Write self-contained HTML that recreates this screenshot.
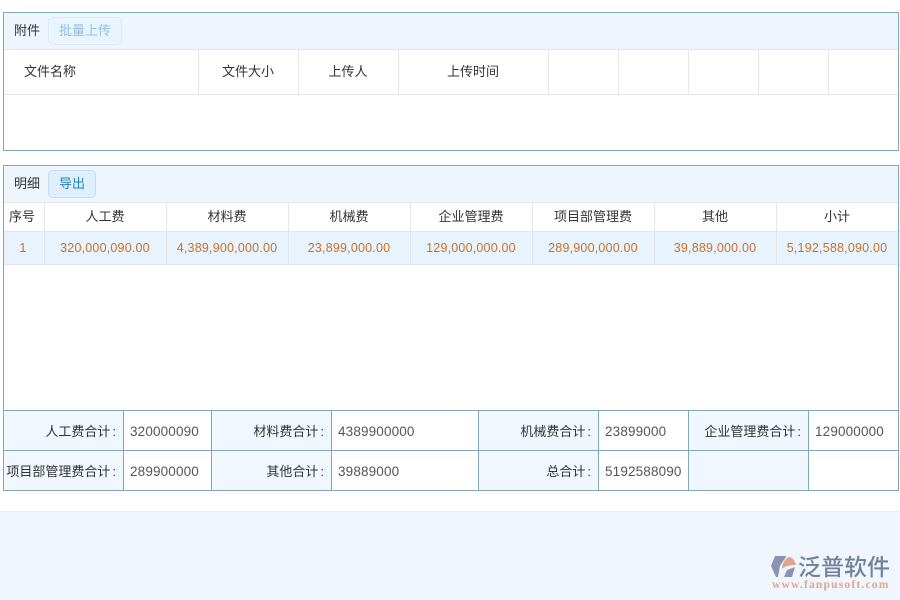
<!DOCTYPE html>
<html><head><meta charset="utf-8">
<style>
html,body{margin:0;padding:0;width:900px;height:600px;overflow:hidden;background:#fff}
body{position:relative;font-family:"Liberation Sans","Noto Sans CJK SC",sans-serif;font-size:13px;color:#333}
.a{position:absolute;box-sizing:border-box}
.t{position:absolute;white-space:nowrap;text-align:center;line-height:20px;height:20px;margin-top:1px}
.v{position:absolute;width:1px;background:#e3e6e8}
.h{position:absolute;height:1px;background:#e3e6e8}
.bv{position:absolute;width:1px;background:#7fa8ba}
.bh{position:absolute;height:1px;background:#7fa8ba}
.o{color:#c9702c;font-size:12.5px;letter-spacing:.2px}
.r{text-align:right}
.r b{font-weight:normal;padding-left:2px}
.n{color:#555;letter-spacing:.15px;text-align:left;font-size:13.5px}
.f{position:absolute;background:#f0f7fe}
</style></head><body>

<div class="a" style="left:3px;top:12px;width:896px;height:139px;border:1px solid #7fa8ba"></div>
<div class="a" style="left:4px;top:13px;width:894px;height:36px;background:#eef5fd"></div>
<div class="h" style="left:4px;top:49px;width:894px"></div>
<div class="h" style="left:4px;top:94px;width:894px"></div>
<div class="v" style="left:198px;top:50px;height:44px"></div>
<div class="v" style="left:298px;top:50px;height:44px"></div>
<div class="v" style="left:398px;top:50px;height:44px"></div>
<div class="v" style="left:548px;top:50px;height:44px"></div>
<div class="v" style="left:618px;top:50px;height:44px"></div>
<div class="v" style="left:688px;top:50px;height:44px"></div>
<div class="v" style="left:758px;top:50px;height:44px"></div>
<div class="v" style="left:828px;top:50px;height:44px"></div>
<div class="t" style="left:14px;top:20px">附件</div>
<div class="a" style="left:48px;top:17px;width:74px;height:28px;background:#e9f4fd;border:1px solid #d9e9f5;border-radius:5px"></div>
<div class="t" style="left:48px;top:20px;width:74px;color:#8fc0e4">批量上传</div>
<div class="t" style="left:24px;top:61px">文件名称</div>
<div class="t" style="left:198px;top:61px;width:100px">文件大小</div>
<div class="t" style="left:298px;top:61px;width:100px">上传人</div>
<div class="t" style="left:398px;top:61px;width:150px">上传时间</div>

<div class="a" style="left:3px;top:165px;width:896px;height:326px;border:1px solid #7fa8ba"></div>
<div class="a" style="left:4px;top:166px;width:894px;height:36px;background:#eef5fd"></div>
<div class="h" style="left:4px;top:202px;width:894px"></div>
<div class="a" style="left:4px;top:232px;width:894px;height:32px;background:#e8f4fd"></div>
<div class="h" style="left:4px;top:231px;width:894px"></div>
<div class="h" style="left:4px;top:264px;width:894px"></div>
<div class="v" style="left:44px;top:203px;height:61px"></div>
<div class="v" style="left:166px;top:203px;height:61px"></div>
<div class="v" style="left:288px;top:203px;height:61px"></div>
<div class="v" style="left:410px;top:203px;height:61px"></div>
<div class="v" style="left:532px;top:203px;height:61px"></div>
<div class="v" style="left:654px;top:203px;height:61px"></div>
<div class="v" style="left:776px;top:203px;height:61px"></div>
<div class="t" style="left:14px;top:173px">明细</div>
<div class="a" style="left:48px;top:170px;width:48px;height:28px;background:#dfeffb;border:1px solid #c4dcec;border-radius:5px"></div>
<div class="t" style="left:48px;top:173px;width:48px;color:#1f82c0">导出</div>

<div class="t" style="left:4px;top:206px;width:36px">序号</div>
<div class="t" style="left:44px;top:206px;width:122px">人工费</div>
<div class="t" style="left:166px;top:206px;width:122px">材料费</div>
<div class="t" style="left:288px;top:206px;width:122px">机械费</div>
<div class="t" style="left:410px;top:206px;width:122px">企业管理费</div>
<div class="t" style="left:532px;top:206px;width:122px">项目部管理费</div>
<div class="t" style="left:654px;top:206px;width:122px">其他</div>
<div class="t" style="left:776px;top:206px;width:122px">小计</div>

<div class="t o" style="left:4px;top:237px;width:38px">1</div>
<div class="t o" style="left:44px;top:237px;width:122px">320,000,090.00</div>
<div class="t o" style="left:166px;top:237px;width:122px">4,389,900,000.00</div>
<div class="t o" style="left:288px;top:237px;width:122px">23,899,000.00</div>
<div class="t o" style="left:410px;top:237px;width:122px">129,000,000.00</div>
<div class="t o" style="left:532px;top:237px;width:122px">289,900,000.00</div>
<div class="t o" style="left:654px;top:237px;width:122px">39,889,000.00</div>
<div class="t o" style="left:776px;top:237px;width:122px">5,192,588,090.00</div>

<div class="f" style="left:4px;top:411px;width:119px;height:79px"></div>
<div class="f" style="left:212px;top:411px;width:119px;height:79px"></div>
<div class="f" style="left:479px;top:411px;width:119px;height:79px"></div>
<div class="f" style="left:689px;top:411px;width:119px;height:79px"></div>
<div class="bh" style="left:4px;top:410px;width:894px"></div>
<div class="bh" style="left:4px;top:450px;width:894px"></div>
<div class="bv" style="left:123px;top:410px;height:80px"></div>
<div class="bv" style="left:211px;top:410px;height:80px"></div>
<div class="bv" style="left:331px;top:410px;height:80px"></div>
<div class="bv" style="left:478px;top:410px;height:80px"></div>
<div class="bv" style="left:598px;top:410px;height:80px"></div>
<div class="bv" style="left:688px;top:410px;height:80px"></div>
<div class="bv" style="left:808px;top:410px;height:80px"></div>

<div class="t r" style="left:4px;top:421px;width:112px">人工费合计<b>:</b></div>
<div class="t n" style="left:130px;top:421px">320000090</div>
<div class="t r" style="left:212px;top:421px;width:112px">材料费合计<b>:</b></div>
<div class="t n" style="left:338px;top:421px">4389900000</div>
<div class="t r" style="left:479px;top:421px;width:112px">机械费合计<b>:</b></div>
<div class="t n" style="left:605px;top:421px">23899000</div>
<div class="t r" style="left:689px;top:421px;width:112px">企业管理费合计<b>:</b></div>
<div class="t n" style="left:815px;top:421px">129000000</div>
<div class="t r" style="left:4px;top:461px;width:112px">项目部管理费合计<b>:</b></div>
<div class="t n" style="left:130px;top:461px">289900000</div>
<div class="t r" style="left:212px;top:461px;width:112px">其他合计<b>:</b></div>
<div class="t n" style="left:338px;top:461px">39889000</div>
<div class="t r" style="left:479px;top:461px;width:112px">总合计<b>:</b></div>
<div class="t n" style="left:605px;top:461px">5192588090</div>

<div class="a" style="left:0;top:511px;width:900px;height:89px;background:#f1f6fe;border-top:1px solid #e9edf2"></div>

<svg class="a" style="left:770px;top:555px" width="28" height="24" viewBox="0 0 28 24">
<path d="M1 11 5 1H16.5L10 11 8 22H6Z" fill="#8796ae"/>
<path d="M12 14C12 8 16 2 20 2 23 3 25 6 26 10 20 10 15 11 12 14Z" fill="#dda68c"/>
<path d="M14 22 17 15 25 12 22 22Z" fill="#8796ae"/>
</svg>
<div class="t" style="left:798px;top:552px;height:30px;line-height:30px;font-size:23px;font-weight:500;color:#71829b;letter-spacing:0;margin:0;font-family:'Liberation Sans','Noto Sans CJK SC',sans-serif">泛普软件</div>
<div class="t" style="left:772px;top:577px;height:14px;line-height:14px;font-size:11.5px;font-weight:bold;letter-spacing:1.2px;color:#e0a68c;font-family:'Liberation Serif',serif">www.fanpusoft.com</div>
</body></html>
